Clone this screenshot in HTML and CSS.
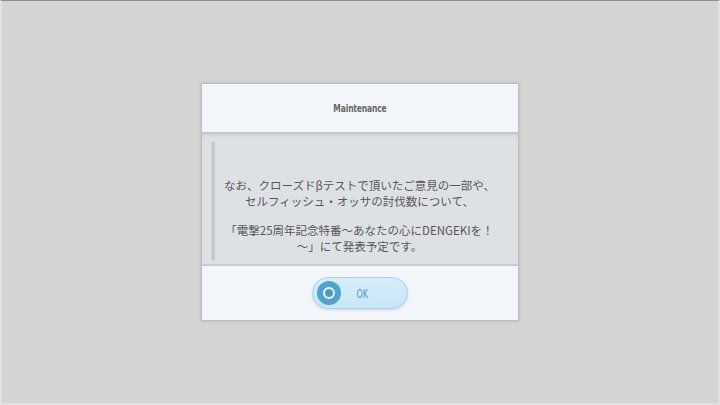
FILE: index.html
```
<!DOCTYPE html>
<html lang="ja">
<head>
    <meta charset="UTF-8">
    <title>Maintenance</title>
    <link rel="stylesheet" href="styles.css">
</head>
<body>
<div class="screen">
    <div class="dialog">
        <div class="dialog-head"><span class="narrow">Maintenance</span></div>
        <div class="dialog-body">
            <div class="scrollbar"></div>
            <div class="message">
                <p>なお、クローズドβテストで頂いたご意見の一部や、<br>セルフィッシュ・オッサの討伐数について、</p>
                <p>「電撃25周年記念特番～あなたの心にDENGEKIを！<br>～」にて発表予定です。</p>
            </div>
        </div>
        <div class="dialog-foot">
            <div class="btn-ok">
                <span class="btn-mark"><span></span></span>
                <span class="btn-label narrow">OK</span>
            </div>
        </div>
    </div>
</div>
</body>
</html>
```
FILE: styles.css
```
html, body {
    margin: 0;
    height: 100%;
    overflow: hidden;
}

body {
    background: #d4d4d4;
    font-family: "Noto Sans CJK JP", "Noto Sans", sans-serif;
}

.screen {
    box-sizing: border-box;
    height: 100%;
    border-top: 1px solid #8e8e8e;
    border-left: 2px solid #e2e2e2;
    border-right: 2px solid #e0e0e0;
    border-bottom: 2px solid #e0e0e0;
    display: flex;
    align-items: center;
    justify-content: center;
}

.dialog {
    width: 316px;
    border: 1px solid #bcbcbc;
    box-shadow: 0 0 3px rgba(0, 0, 0, .15);
    background: #f2f5f9;
    display: flex;
    flex-direction: column;
}

/* squared-off narrow lettering for the title and button */
.narrow {
    display: inline-block;
    font-family: "DejaVu Sans", sans-serif;
    font-weight: bold;
    transform: scaleX(.72);
    letter-spacing: -.2px;
}

.dialog-head {
    height: 48px;
    display: flex;
    align-items: center;
    justify-content: center;
    font-size: 10.5px;
    color: #676767;
    border-bottom: 2px solid #c3c6ca;
}

.dialog-body {
    height: 132px;
    background: #dee1e4;
    display: flex;
    padding: 8px 0 4px 9px;
    box-sizing: border-box;
    border-bottom: 2px solid #c9ccd0;
    box-shadow: inset 0 2px 3px rgba(0, 0, 0, .06);
}

.scrollbar {
    width: 3px;
    background: #c4c7cb;
    border-left: 1px solid #d0d3d6;
}

.message {
    flex: 1;
    display: flex;
    flex-direction: column;
    justify-content: center;
    text-align: center;
    color: #575757;
    font-size: 11.5px;
    line-height: 15.5px;
    padding: 30px 14px 0 0;
}

.message p {
    margin: 0;
}

.message p + p {
    margin-top: 14px;
}

.dialog-foot {
    height: 54px;
    display: flex;
    align-items: center;
    justify-content: center;
}

.btn-ok {
    width: 96px;
    height: 32px;
    box-sizing: border-box;
    border-radius: 16px;
    border: 1px solid #a4d3ec;
    background: linear-gradient(#d8eefa, #c9e6f6);
    box-shadow: 0 1px 2px rgba(80, 140, 180, .25);
    display: flex;
    align-items: center;
    padding-left: 4px;
}

.btn-mark {
    width: 24px;
    height: 24px;
    border-radius: 50%;
    background: #4ea3cf;
    display: flex;
    align-items: center;
    justify-content: center;
}

.btn-mark span {
    width: 8px;
    height: 8px;
    border-radius: 50%;
    background: #4b9ccb;
    border: 2.5px solid #eef7fc;
}

.btn-label {
    margin-left: 12px;
    font-size: 13px;
    color: #4a9cc8;
    font-weight: normal;
    transform: scaleX(.62);
}
```
